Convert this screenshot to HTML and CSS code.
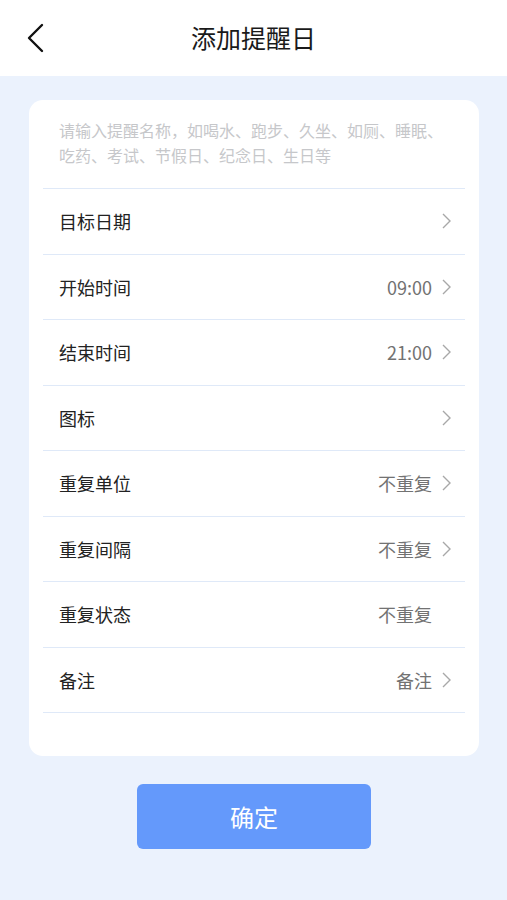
FILE: index.html
```html
<!DOCTYPE html>
<html lang="zh-CN">
<head>
    <meta charset="UTF-8">
    <meta name="viewport" content="width=device-width, initial-scale=1.0">
    <title>添加提醒日</title>
    <link rel="stylesheet" href="styles.css">
</head>
<body>
    <header class="topbar">
        <div class="back">
            <svg width="18" height="30" viewBox="0 0 18 30"><path d="M15 2 L2 15 L15 28" fill="none" stroke="#111" stroke-width="2.4" stroke-linecap="round" stroke-linejoin="round"/></svg>
        </div>
        <h1 class="title">添加提醒日</h1>
    </header>

    <main class="content">
        <section class="card">
            <div class="name-input">请输入提醒名称，如喝水、跑步、久坐、如厕、睡眠、吃药、考试、节假日、纪念日、生日等</div>

            <div class="row">
                <span class="label">目标日期</span>
                <span class="value"></span>
                <span class="arrow"><svg width="9" height="16" viewBox="0 0 9 16"><path d="M1 1 L8 8 L1 15" fill="none" stroke="#a8a8a8" stroke-width="1.4"/></svg></span>
            </div>
            <div class="row">
                <span class="label">开始时间</span>
                <span class="value">09:00</span>
                <span class="arrow"><svg width="9" height="16" viewBox="0 0 9 16"><path d="M1 1 L8 8 L1 15" fill="none" stroke="#a8a8a8" stroke-width="1.4"/></svg></span>
            </div>
            <div class="row">
                <span class="label">结束时间</span>
                <span class="value">21:00</span>
                <span class="arrow"><svg width="9" height="16" viewBox="0 0 9 16"><path d="M1 1 L8 8 L1 15" fill="none" stroke="#a8a8a8" stroke-width="1.4"/></svg></span>
            </div>
            <div class="row">
                <span class="label">图标</span>
                <span class="value"></span>
                <span class="arrow"><svg width="9" height="16" viewBox="0 0 9 16"><path d="M1 1 L8 8 L1 15" fill="none" stroke="#a8a8a8" stroke-width="1.4"/></svg></span>
            </div>
            <div class="row">
                <span class="label">重复单位</span>
                <span class="value">不重复</span>
                <span class="arrow"><svg width="9" height="16" viewBox="0 0 9 16"><path d="M1 1 L8 8 L1 15" fill="none" stroke="#a8a8a8" stroke-width="1.4"/></svg></span>
            </div>
            <div class="row">
                <span class="label">重复间隔</span>
                <span class="value">不重复</span>
                <span class="arrow"><svg width="9" height="16" viewBox="0 0 9 16"><path d="M1 1 L8 8 L1 15" fill="none" stroke="#a8a8a8" stroke-width="1.4"/></svg></span>
            </div>
            <div class="row">
                <span class="label">重复状态</span>
                <span class="value">不重复</span>
                <span class="arrow hidden"></span>
            </div>
            <div class="row">
                <span class="label">备注</span>
                <span class="value">备注</span>
                <span class="arrow"><svg width="9" height="16" viewBox="0 0 9 16"><path d="M1 1 L8 8 L1 15" fill="none" stroke="#a8a8a8" stroke-width="1.4"/></svg></span>
            </div>
        </section>

        <div class="actions">
            <button class="confirm">确定</button>
        </div>
    </main>
</body>
</html>
```

FILE: styles.css
```css
*{
    margin: 0;
    padding: 0;
    box-sizing: border-box;
}
body{
    width: 507px;
    min-height: 900px;
    background: #ebf2fd;
    font-family: "Noto Sans CJK SC", "Noto Sans", sans-serif;
    color: #222;
}
.topbar{
    height: 76px;
    background: #fff;
    display: flex;
    align-items: center;
    justify-content: center;
    position: relative;
}
.back{
    position: absolute;
    left: 27px;
    top: 23px;
    width: 18px;
    height: 30px;
}
.title{
    font-size: 25px;
    font-weight: 400;
    color: #1a1a1a;
    margin-top: -2px;
}
.content{
    padding: 24px 28px 0 29px;
}
.card{
    background: #fff;
    border-radius: 14px;
    padding: 0 14px 43px 14px;
}
.name-input{
    font-size: 16px;
    line-height: 25px;
    color: #c6c7ca;
    padding: 18px 16px 20px 16px;
    border-bottom: 1.5px solid #dfe9f8;
}
.row{
    height: 65.5px;
    display: flex;
    align-items: center;
    padding: 0 14px 0 16px;
    border-bottom: 1.5px solid #dfe9f8;
}
.label{
    font-size: 18px;
    color: #222;
    flex: 1;
}
.value{
    font-size: 18px;
    color: #727272;
}
.arrow{
    width: 9px;
    height: 16px;
    margin-left: 10px;
    display: flex;
}
.actions{
    display: flex;
    justify-content: center;
    padding-top: 28px;
}
.confirm{
    width: 234px;
    height: 65px;
    border: none;
    border-radius: 6px;
    background: #6499fb;
    color: #fff;
    font-family: "Noto Sans CJK SC", "Noto Sans", sans-serif;
    font-size: 24px;
}
```
